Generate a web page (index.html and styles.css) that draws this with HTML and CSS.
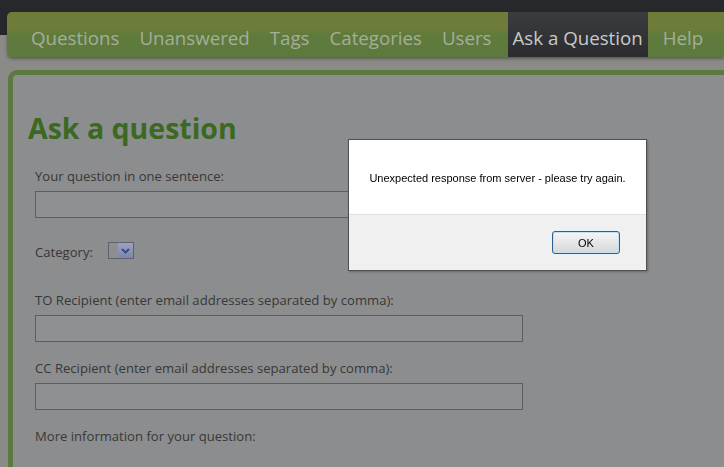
FILE: index.html
```html
<!DOCTYPE html>
<html lang="en">
<head>
<meta charset="utf-8">
<title>Ask a question</title>
<link rel="stylesheet" href="styles.css">
</head>
<body>
<div class="page">
  <nav class="nav">
    <a class="nav-item">Questions</a>
    <a class="nav-item">Unanswered</a>
    <a class="nav-item">Tags</a>
    <a class="nav-item">Categories</a>
    <a class="nav-item">Users</a>
    <a class="nav-item active">Ask a Question</a>
    <a class="nav-item">Help</a>
  </nav>
  <main class="panel">
    <h1 class="title">Ask a question</h1>
    <form class="form">
      <label class="label first">Your question in one sentence:</label>
      <div class="input wide"></div>
      <div class="cat-row">
        <span class="label">Category:</span>
        <span class="select"><span class="select-btn"><svg width="9" height="6" viewBox="0 0 9 6"><path d="M1 1 L4.5 4.5 L8 1" fill="none" stroke="#3b4a86" stroke-width="2"/></svg></span></span>
      </div>
      <label class="label to">TO Recipient (enter email addresses separated by comma):</label>
      <div class="input"></div>
      <label class="label cc">CC Recipient (enter email addresses separated by comma):</label>
      <div class="input"></div>
      <label class="label more">More information for your question:</label>
    </form>
  </main>
</div>
<div class="dialog">
  <div class="dialog-body">Unexpected response from server - please try again.</div>
  <div class="dialog-foot"><button class="ok" type="button">OK</button></div>
</div>
</body>
</html>
```
FILE: styles.css
```css
html, body {
  margin: 0;
  padding: 0;
  height: 100%;
  overflow: hidden;
}
body {
  background: linear-gradient(#27282c 0, #27282c 35px, #8a8b86 35px);
  font-family: "Open Sans", "DejaVu Sans", sans-serif;
}
.page {
  padding-top: 12px;
}
.nav {
  display: flex;
  align-items: stretch;
  margin-left: 7px;
  height: 45px;
  border-radius: 5px 0 0 5px;
  background: linear-gradient(#6f7c39 0, #6d7c39 17px, #5f7b3c 23px, #5c7a3d 45px);
  box-shadow: 0 2px 3px rgba(40, 40, 40, 0.45);
  padding-left: 20px;
}
.nav-item {
  display: flex;
  align-items: center;
  padding: 6px 4px 0;
  margin-right: 12px;
  font-size: 18.7px;
  color: #a6ad9a;
  white-space: nowrap;
}
.nav-item.active {
  background: linear-gradient(#3b3c40, #2a2c30);
  color: #c9cac8;
  padding: 6px 5px 0 5px;
  margin-right: 11px;
}
.panel {
  margin: 13px -30px 0 8px;
  height: 420px;
  border: 5px solid #5a7a40;
  border-right: none;
  border-radius: 9px 0 0 0;
  background: #8c8d8e;
  padding: 0 0 0 15px;
}
.title {
  margin: 0;
  padding-top: 34px;
  font-size: 28.5px;
  line-height: 38px;
  font-weight: 700;
  color: #3b6922;
}
.form {
  display: flex;
  flex-direction: column;
  align-items: flex-start;
  padding-left: 7px;
}
.label {
  display: block;
  font-size: 13.1px;
  line-height: 18px;
  color: #373838;
}
.first { margin-top: 20px; }
.input {
  margin-top: 6px;
  width: 486px;
  height: 25px;
  border: 1px solid #5c5d5e;
  background: #8f9091;
}
.input.wide { width: 600px; }
.cat-row {
  display: flex;
  align-items: center;
  gap: 15px;
  margin-top: 17px;
  height: 34px;
}
.select {
  display: flex;
  justify-content: flex-end;
  width: 24px;
  height: 15px;
  border: 1px solid #5e6170;
  background: #8d8e90;
  margin-top: -3px;
}
.select-btn {
  width: 15px;
  height: 15px;
  background: linear-gradient(#9aa2bf, #7d86a8);
  display: flex;
  align-items: center;
  justify-content: center;
}
.to { margin-top: 22px; }
.cc { margin-top: 17px; }
.more { margin-top: 17px; }
.dialog {
  position: fixed;
  left: 348px;
  top: 139px;
  width: 297px;
  height: 130px;
  border: 1px solid #4e4f50;
  background: #ffffff;
  display: flex;
  flex-direction: column;
  font-family: "Liberation Sans", Arial, sans-serif;
  box-shadow: 1px 1px 2px rgba(0, 0, 0, 0.25);
}
.dialog-body {
  height: 74px;
  display: flex;
  align-items: center;
  justify-content: center;
  font-size: 11px;
  color: #000;
  padding-top: 2px;
  box-sizing: border-box;
}
.dialog-foot {
  flex: 1;
  background: #f0f0f0;
  border-top: 1px solid #dfdfdf;
  display: flex;
  align-items: center;
  justify-content: flex-end;
  padding-right: 26px;
}
.ok {
  width: 68px;
  height: 23px;
  border: 1px solid #2c5f92;
  border-radius: 3px;
  background: linear-gradient(#f6f6f6, #e6e6e6 50%, #d8d8d8);
  box-shadow: inset 0 0 0 1px #bfe0f6;
  font-family: "Liberation Sans", Arial, sans-serif;
  font-size: 11px;
  color: #000;
  padding: 0;
}
```
